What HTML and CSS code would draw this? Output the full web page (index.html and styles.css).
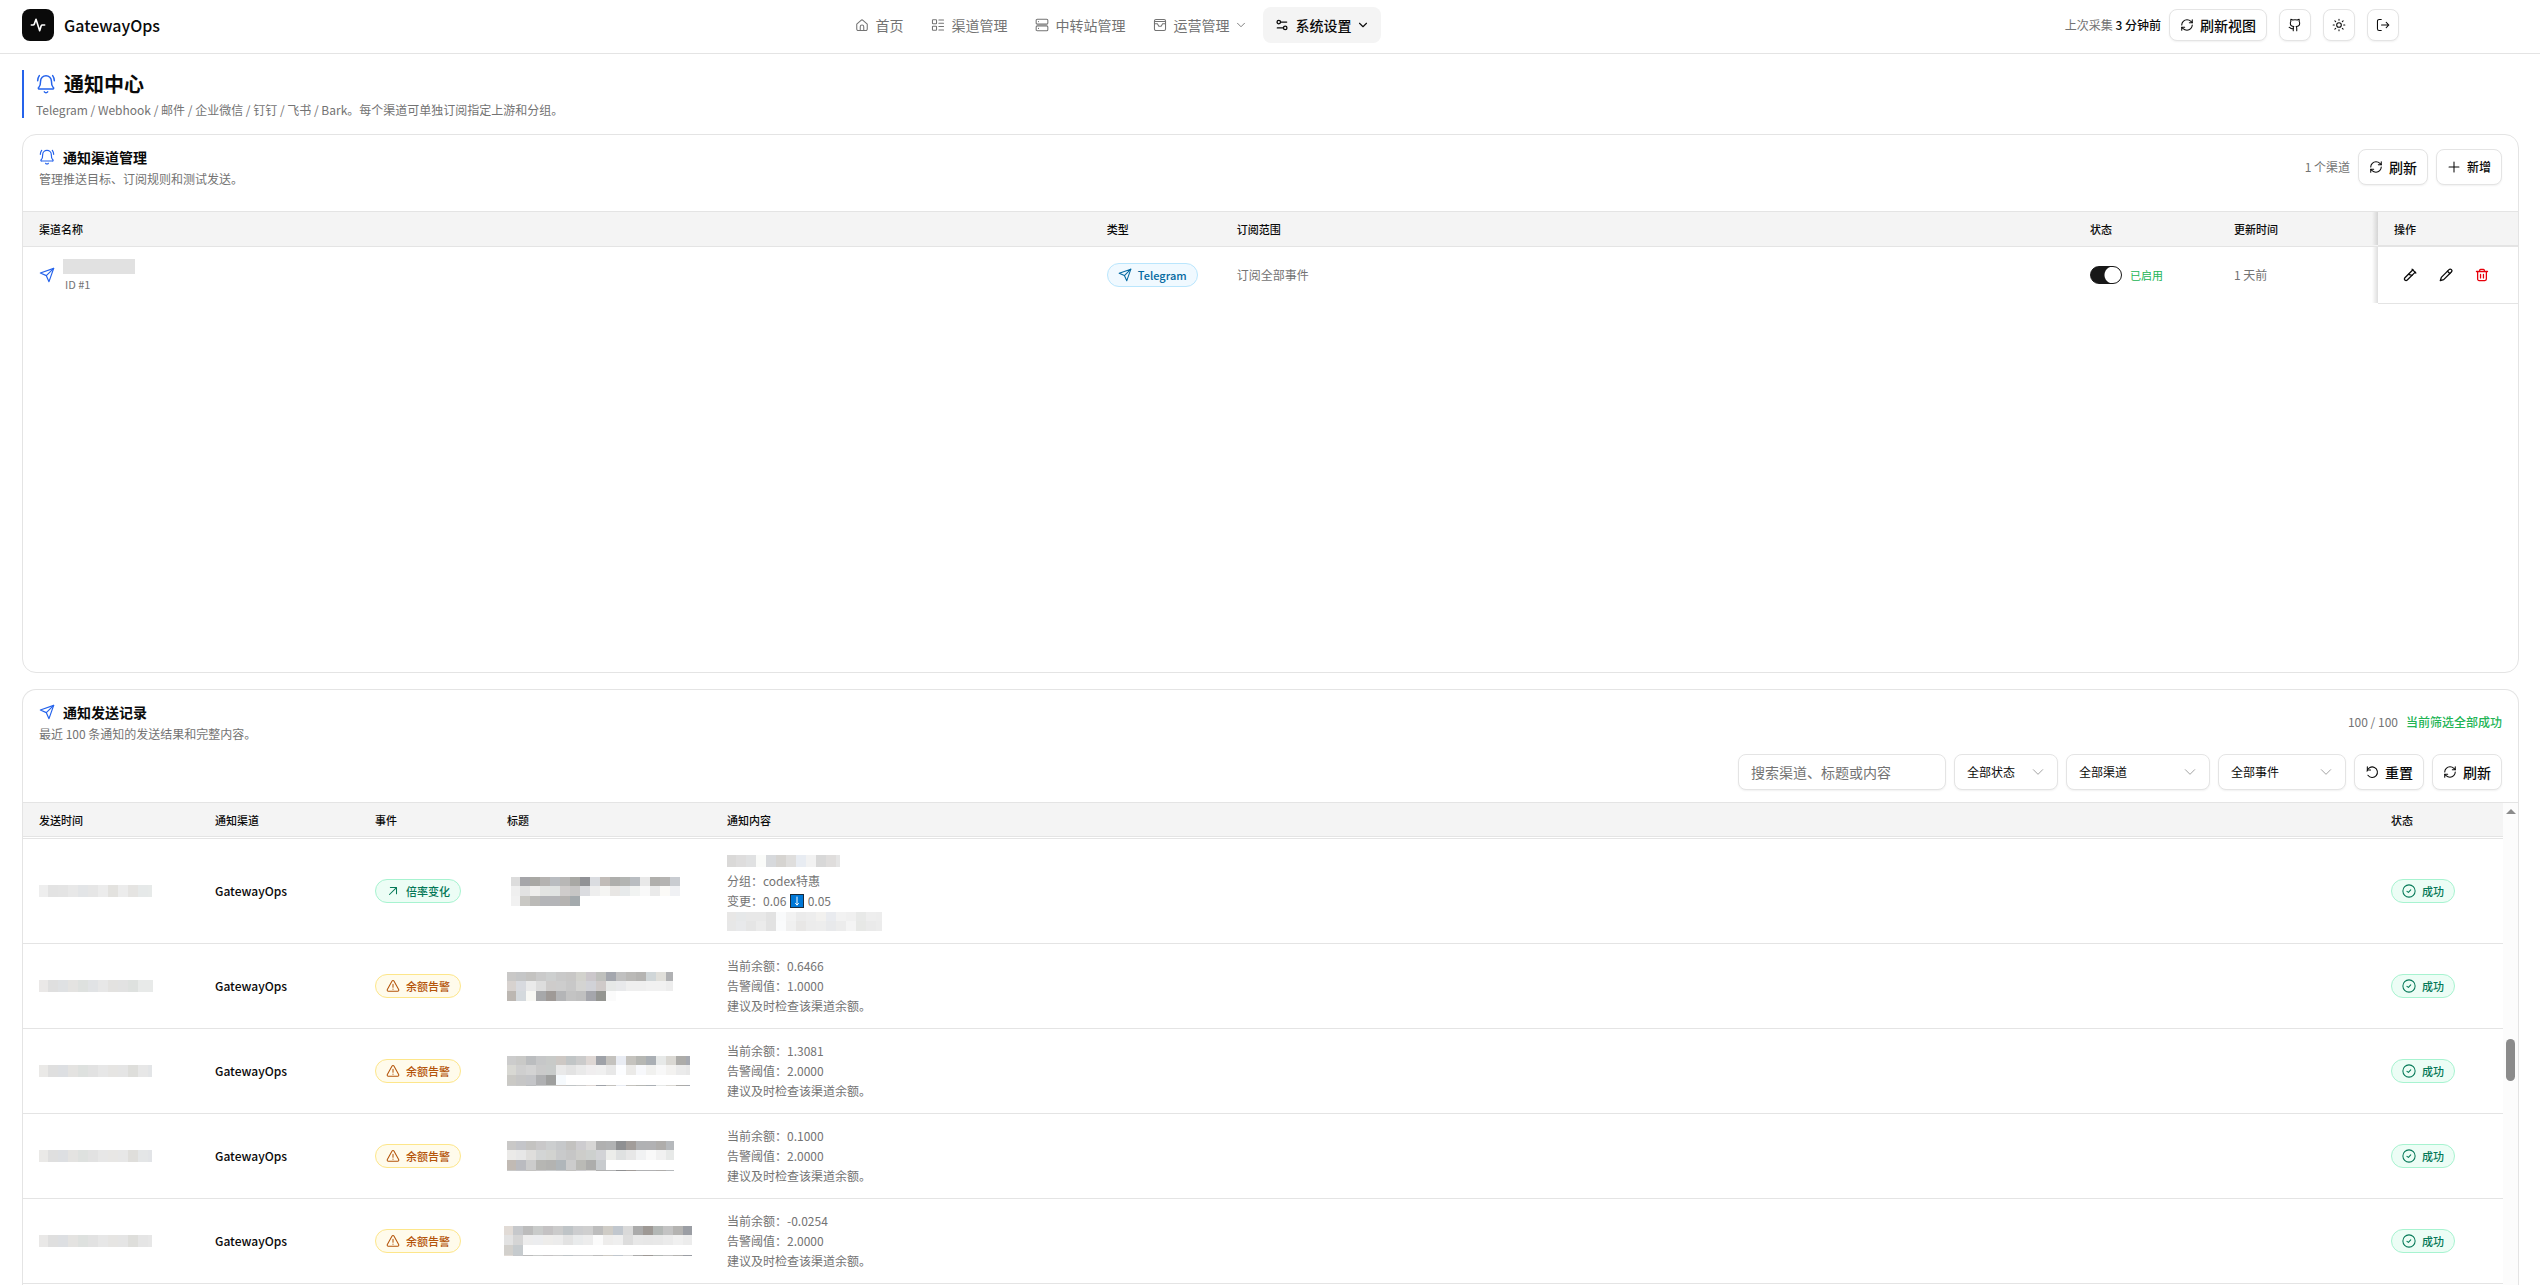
FILE: index.html
```html
<!DOCTYPE html>
<html lang="zh-CN">
<head>
    <meta charset="utf-8">
    <title>GatewayOps</title>
    <link rel="stylesheet" href="styles.css">
</head>
<body>
    <svg class="sprite" aria-hidden="true">
        <symbol id="i-pulse" viewBox="0 0 24 24"><path d="M2 12h2.500c1 0 1.600-.5 1.900-1.300L9 3.500l5.500 17 2.300-7.300c.3-.8.9-1.200 1.700-1.200H22"/></symbol>
        <symbol id="i-home" viewBox="0 0 24 24"><path d="M3 10.500 10.300 4a2.600 2.600 0 0 1 3.400 0L21 10.500V19a2.500 2.500 0 0 1-2.500 2.500h-13A2.500 2.500 0 0 1 3 19Z"/><path d="M9 21v-6a3 3 0 0 1 6 0v6"/></symbol>
        <symbol id="i-list" viewBox="0 0 24 24"><rect x="2.500" y="3" width="7" height="7" rx="1"/><rect x="2.500" y="14" width="7" height="7" rx="1"/><path d="M13.500 3.500h8M13.500 9h8M13.500 14.500h8M13.500 20.500h8"/></symbol>
        <symbol id="i-server" viewBox="0 0 24 24"><rect x="2" y="2" width="20" height="8.500" rx="2"/><rect x="2" y="13.500" width="20" height="8.500" rx="2"/><path d="M6 6.200h.1M6 17.800h.1"/></symbol>
        <symbol id="i-archive" viewBox="0 0 24 24"><rect x="2.500" y="2.500" width="19" height="19" rx="2.500"/><path d="M2.500 6h19M2.500 10h5l2.500 4h4l2.500-4h5"/></symbol>
        <symbol id="i-sliders" viewBox="0 0 24 24"><circle cx="6.500" cy="7" r="3"/><circle cx="17.500" cy="17" r="3"/><path d="M9.500 7H20M4 17h10.500"/></symbol>
        <symbol id="i-down" viewBox="0 0 24 24"><path d="m5 8.500 7 7 7-7"/></symbol>
        <symbol id="i-refresh" viewBox="0 0 24 24"><path d="M3 12a9 9 0 0 1 9-9 9.750 9.750 0 0 1 6.740 2.740L21 8"/><path d="M21 3v5h-5"/><path d="M21 12a9 9 0 0 1-9 9 9.750 9.750 0 0 1-6.740-2.740L3 16"/><path d="M8 16H3v5"/></symbol>
        <symbol id="i-reset" viewBox="0 0 24 24"><path d="M3.500 10.500A9 9 0 1 1 5 17.500"/><path d="M4 3v5.500h5.500"/></symbol>
        <symbol id="i-github" viewBox="0 0 24 24"><path d="M15 22v-4a4.800 4.800 0 0 0-1-3.500c3 0 6-2 6-5.500.08-1.250-.27-2.480-1-3.500.28-1.150.28-2.350 0-3.500 0 0-1 0-3 1.500-2.640-.5-5.360-.5-8 0C6 2 5 2 5 2c-.3 1.150-.3 2.350 0 3.500A5.400 5.400 0 0 0 4 9c0 3.500 3 5.500 6 5.500-.39.490-.68 1.050-.85 1.650-.17.600-.22 1.230-.15 1.850v4"/><path d="M9 18c-4.510 2-5-2-7-2"/></symbol>
        <symbol id="i-sun" viewBox="0 0 24 24"><circle cx="12" cy="12" r="4"/><path d="M12 2v2M12 20v2M4.900 4.900l1.400 1.400M17.700 17.700l1.400 1.400M2 12h2M20 12h2M6.300 17.700l-1.400 1.400M19.100 4.900l-1.400 1.400"/></symbol>
        <symbol id="i-logout" viewBox="0 0 24 24"><path d="M9 2.500H5.500A3 3 0 0 0 2.500 5.500v13a3 3 0 0 0 3 3H9"/><path d="M9.500 12H22M17.500 7.500 22 12l-4.500 4.500"/></symbol>
        <symbol id="i-bell" viewBox="0 0 24 24"><path d="M10 21.500a2.500 2.500 0 0 0 4 0"/><path d="M22 8c0-2.300-.8-4.300-2-6M4 2C2.800 3.700 2 5.700 2 8"/><path d="M3.500 16A1 1 0 0 0 4.200 18h15.600a1 1 0 0 0 .7-2C19.200 14.600 18.500 12.500 18.500 8.500a6.500 6.500 0 0 0-13 0c0 4-.7 6.100-2 7.500"/></symbol>
        <symbol id="i-send" viewBox="0 0 24 24"><path d="M22 2 15 22l-4-9-9-4Z"/><path d="M22 2 11 13"/></symbol>
        <symbol id="i-plus" viewBox="0 0 24 24"><path d="M12 3.500v17M3.500 12h17"/></symbol>
        <symbol id="i-tube" viewBox="0 0 24 24"><path d="M21 7 7.300 20.700a2.800 2.800 0 0 1-4-4L17 3"/><path d="m15.500 2 6.500 6.500"/><path d="m9.500 11 6 1.500"/></symbol>
        <symbol id="i-pencil" viewBox="0 0 24 24"><path d="M21.200 6.800a2.800 2.800 0 0 0-4-4L4 16l-1.800 5.800L8 20Z"/><path d="m14.500 5.500 4 4"/></symbol>
        <symbol id="i-trash" viewBox="0 0 24 24"><path d="M2.500 6h19M8 6V4a1.500 1.500 0 0 1 1.500-1.500h5A1.500 1.500 0 0 1 16 4v2M4.500 6v13A2.500 2.500 0 0 0 7 21.500h10a2.500 2.500 0 0 0 2.500-2.500V6M9.500 11v6M14.500 11v6"/></symbol>
        <symbol id="i-up-right" viewBox="0 0 24 24"><path d="M6 18 17.500 6.500M7.500 6H18v10.500"/></symbol>
        <symbol id="i-alert" viewBox="0 0 24 24"><path d="M10.400 3.500 2.300 18a2 2 0 0 0 1.800 3h15.800a2 2 0 0 0 1.800-3L13.600 3.500a1.850 1.850 0 0 0-3.200 0Z"/><path d="M12 9v5M12 17.300v.1"/></symbol>
        <symbol id="i-check" viewBox="0 0 24 24"><circle cx="12" cy="12" r="10.500"/><path d="m8.500 12.500 2.500 2 4-4.500"/></symbol>
        <symbol id="i-arrow-key" viewBox="0 0 14 14"><path d="M0 0h14v14H0z" fill="#1b2b3b" stroke="none"/><path d="M1 1h12v12H1z" fill="#0078d7" stroke="none"/><path d="M7 3v8M5.500 9.500 7 11l1.500-1.500" stroke="#fff" stroke-width="1"/></symbol>
    </svg>

    <header class="topbar">
        <a class="brand" href="#">
            <span class="brand-mark"><svg class="icon icon-16"><use href="#i-pulse"/></svg></span>
            GatewayOps
        </a>
        <nav class="nav">
            <a class="nav-item" href="#"><svg class="icon"><use href="#i-home"/></svg>首页</a>
            <a class="nav-item" href="#"><svg class="icon"><use href="#i-list"/></svg>渠道管理</a>
            <a class="nav-item" href="#"><svg class="icon"><use href="#i-server"/></svg>中转站管理</a>
            <a class="nav-item" href="#"><svg class="icon"><use href="#i-archive"/></svg>运营管理<svg class="icon icon-12"><use href="#i-down"/></svg></a>
            <a class="nav-item active" href="#"><svg class="icon"><use href="#i-sliders"/></svg>系统设置<svg class="icon icon-12"><use href="#i-down"/></svg></a>
        </nav>
        <div class="topbar-actions">
            <div class="collect">
                <span class="muted">上次采集 <strong>3 分钟前</strong></span>
                <button class="btn btn-sm" type="button"><svg class="icon"><use href="#i-refresh"/></svg>刷新视图</button>
            </div>
            <button class="btn btn-square" type="button" aria-label="GitHub"><svg class="icon"><use href="#i-github"/></svg></button>
            <button class="btn btn-square" type="button" aria-label="主题"><svg class="icon"><use href="#i-sun"/></svg></button>
            <button class="btn btn-square" type="button" aria-label="退出"><svg class="icon"><use href="#i-logout"/></svg></button>
        </div>
    </header>

    <main class="page">
        <div class="page-title">
            <h1><svg class="icon icon-20 blue"><use href="#i-bell"/></svg>通知中心</h1>
            <p>Telegram / Webhook / 邮件 / 企业微信 / 钉钉 / 飞书 / Bark。每个渠道可单独订阅指定上游和分组。</p>
        </div>

        <section class="panel channels">
            <div class="panel-head">
                <div>
                    <h2><svg class="icon icon-16 blue"><use href="#i-bell"/></svg>通知渠道管理</h2>
                    <p>管理推送目标、订阅规则和测试发送。</p>
                </div>
                <div class="tools">
                    <span class="muted">1 个渠道</span>
                    <button class="btn" type="button"><svg class="icon"><use href="#i-refresh"/></svg>刷新</button>
                    <button class="btn btn-text-sm" type="button"><svg class="icon"><use href="#i-plus"/></svg>新增</button>
                </div>
            </div>
            <table class="table channel-table">
                <thead>
                    <tr>
                        <th class="col-name">渠道名称</th>
                        <th class="col-type">类型</th>
                        <th>订阅范围</th>
                        <th class="col-switch">状态</th>
                        <th class="col-updated">更新时间</th>
                        <th class="col-ops">操作</th>
                    </tr>
                </thead>
                <tbody>
                    <tr>
                        <td>
                            <div class="channel">
                                <svg class="icon icon-16 blue"><use href="#i-send"/></svg>
                                <div>
                                    <span class="redacted"></span>
                                    <span class="channel-id">ID #1</span>
                                </div>
                            </div>
                        </td>
                        <td><span class="badge sky"><svg class="icon"><use href="#i-send"/></svg>Telegram</span></td>
                        <td class="muted">订阅全部事件</td>
                        <td>
                            <label class="switch"><input type="checkbox" checked>已启用</label>
                        </td>
                        <td class="muted">1 天前</td>
                        <td class="col-ops">
                            <div class="ops">
                                <button type="button" aria-label="测试"><svg class="icon"><use href="#i-tube"/></svg></button>
                                <button type="button" aria-label="编辑"><svg class="icon"><use href="#i-pencil"/></svg></button>
                                <button class="danger" type="button" aria-label="删除"><svg class="icon"><use href="#i-trash"/></svg></button>
                            </div>
                        </td>
                    </tr>
                </tbody>
            </table>
        </section>

        <section class="panel records">
            <div class="panel-head">
                <div>
                    <h2><svg class="icon icon-16 blue"><use href="#i-send"/></svg>通知发送记录</h2>
                    <p>最近 100 条通知的发送结果和完整内容。</p>
                </div>
                <div class="filters">
                    <div class="summary"><span class="muted">100 / 100</span><span class="ok">当前筛选全部成功</span></div>
                    <div class="tools">
                        <input class="search" type="text" placeholder="搜索渠道、标题或内容" aria-label="搜索">
                        <div class="select select-status"><select aria-label="状态"><option>全部状态</option></select><svg class="icon icon-16"><use href="#i-down"/></svg></div>
                        <div class="select select-channel"><select aria-label="渠道"><option>全部渠道</option></select><svg class="icon icon-16"><use href="#i-down"/></svg></div>
                        <div class="select select-event"><select aria-label="事件"><option>全部事件</option></select><svg class="icon icon-16"><use href="#i-down"/></svg></div>
                        <button class="btn" type="button"><svg class="icon"><use href="#i-reset"/></svg>重置</button>
                        <button class="btn" type="button"><svg class="icon"><use href="#i-refresh"/></svg>刷新</button>
                    </div>
                </div>
            </div>
            <div class="scroller">
                <table class="table record-table">
                    <thead>
                        <tr>
                            <th class="col-time">发送时间</th>
                            <th class="col-channel">通知渠道</th>
                            <th class="col-event">事件</th>
                            <th class="col-title">标题</th>
                            <th>通知内容</th>
                            <th class="col-status">状态</th>
                        </tr>
                    </thead>
                    <tbody>
                        <tr>
                            <td><span class="mosaic" data-width="113" data-rows="ee e3 e4 e8 e3e5e7 e6 ec e3e2df ec e5e4e2 e6e9e9 e7eae9"></span></td>
                            <td class="strong">GatewayOps</td>
                            <td><span class="badge green"><svg class="icon"><use href="#i-up-right"/></svg>倍率变化</span></td>
                            <td class="inset"><span class="mosaic" data-width="169" data-rows="dc a5a5a9 a9a8a4 b5b3b1 b9bcc0 b8b7b6 a8a8a4 919296 dadce0 c1bcb8 aeaeac b3b5b3 b9bdc1 e8 b0afac b5b4b2 c9ccd1|ef e2 efeeec e3e4e2 e0e3e2 cfcccb c7c6c5 dbdce0 ee f5f5f3 e8e6e4 e7eaeb f1f3f2 f9 ea fbfaf7 f0f1f4|f1 c9c8c4 bbbab7 b4b5b8 b4b5b8 b5b3b1 a4aaad"></span></td>
                            <td class="content">
                                <div><span class="mosaic" data-width="113" data-rows="dad9d8 dedddd e0e1e2 fafbf9 d7d9dc d6d4d1 dfdedd e8ecf2 f2 d8 dfdddc e5"></span></div>
                                <div>分组：codex特惠</div>
                                <div>变更：0.06 <svg class="icon arrow-key"><use href="#i-arrow-key"/></svg> 0.05</div>
                                <div><span class="mosaic" data-width="155" data-rows="e8e7e6 e6e8e9 e8 e8 e2 f9fafb f2 eb ed f2f1ef e9ebef f2 f0 e8e9e8 ee ed|e7 e8e9eb e5 eb e2 fafbfc f0 e8e7e6 ec ed e8e9eb ec f4 e7e8e6 ea ec"></span></div>
                            </td>
                            <td><span class="badge green"><svg class="icon"><use href="#i-check"/></svg>成功</span></td>
                        </tr>
                        <tr>
                            <td><span class="mosaic" data-width="114" data-rows="eae8e7 df dfe1e3 e4e3e1 dee1df e1e3e5 e7 e3e2e0 e2 dee1df e8eae9 e8eae9"></span></td>
                            <td class="strong">GatewayOps</td>
                            <td><span class="badge amber"><svg class="icon"><use href="#i-alert"/></svg>余额告警</span></td>
                            <td><span class="mosaic" data-width="166" data-rows="c9c8c7 c5c6c7 c4c3c1 ca cdcfcf c9 c8c7c6 d2d2cd cbc7cb bfc0bd a4a7ae c0 bab9b7 b5b4b2 d0d6d8 e0dfda b0b1b3|d7d2cf d8dadf ea dd cecccb cd c8 d4d4d2 d1d2d7 cfcac9 e6e8e7 e8e9eb ef ef f1 f1 ed|bcb7b2 d4d9dd f8f8f4 a7a8aa 9f9a97 b4b5b7 c3 c0 a5a6ac 949591 fb"></span></td>
                            <td class="content"><div>当前余额：0.6466</div><div>告警阈值：1.0000</div><div>建议及时检查该渠道余额。</div></td>
                            <td><span class="badge green"><svg class="icon"><use href="#i-check"/></svg>成功</span></td>
                        </tr>
                        <tr>
                            <td><span class="mosaic" data-width="113" data-rows="eae9e7 df dddfe2 e4e3e1 dee1df e2 e7 e6e5e3 e5 dededb e7 e3e5e7"></span></td>
                            <td class="strong">GatewayOps</td>
                            <td><span class="badge amber"><svg class="icon"><use href="#i-alert"/></svg>余额告警</span></td>
                            <td><span class="mosaic underlined" data-width="183" data-rows="cc c9c9c7 bbbdbf c6c7c8 c8cac8 cdc8c4 c1c5c6 cb ded7d4 9fa2a8 c4c2be e9ecf3 c5c3be b6b7b3 aaafb4 e7e9e8 dad8d3 adaca9 a6a9b0|d8d8d3 cf d3 ca c8cbca e9 e3 ea f0eeef f0 e8 fcfdff ebeae8 f7f8fb f1f1ef f8 f3f2f0 eb e8|cac9c5 c6 c4c5c8 afb0b2 9e9f9e f6fafd"></span></td>
                            <td class="content"><div>当前余额：1.3081</div><div>告警阈值：2.0000</div><div>建议及时检查该渠道余额。</div></td>
                            <td><span class="badge green"><svg class="icon"><use href="#i-check"/></svg>成功</span></td>
                        </tr>
                        <tr>
                            <td><span class="mosaic" data-width="113" data-rows="eae9e7 df dddfe2 e4e3e1 dee1df e2 e7 e8e7e5 e7 dfdedb e4e6e7 e2e4e7"></span></td>
                            <td class="strong">GatewayOps</td>
                            <td><span class="badge amber"><svg class="icon"><use href="#i-alert"/></svg>余额告警</span></td>
                            <td><span class="mosaic underlined" data-width="167" data-rows="c9c8c7 c4c5c9 c4c3c1 c9c8c9 cccecf c6c8ca c3c2c0 cdcccf d7d6d5 b0 b1b2b3 8f9092 a29d9a b0b1b3 b1b1b3 afadab b6b9bc|ebeae8 e7 dfdedc d3d5d5 d2d3d0 c9cacb c6 cdcdca cdd0ce d2d3d6 ecedea dfe1e1 e7 f1f2f3 f9 f1 e7e9e8|c1bab4 babbc0 cc b6b6b3 b3b3b1 b0b6ba cc babab6 adadac c8cbce"></span></td>
                            <td class="content"><div>当前余额：0.1000</div><div>告警阈值：2.0000</div><div>建议及时检查该渠道余额。</div></td>
                            <td><span class="badge green"><svg class="icon"><use href="#i-check"/></svg>成功</span></td>
                        </tr>
                        <tr>
                            <td><span class="mosaic" data-width="113" data-rows="e9e8e7 df dddfe2 e4e3e1 dee1df e2 e7 e6e5e3 e5 dededb e5 e7"></span></td>
                            <td class="strong">GatewayOps</td>
                            <td><span class="badge amber"><svg class="icon"><use href="#i-alert"/></svg>余额告警</span></td>
                            <td class="outset"><span class="mosaic underlined" data-width="188" data-rows="e1dbd6 c6c8cb bc c9cbca c4c2c3 cb bfc4c7 cccdcf cf bd cfccc6 c1c7ce d9 ababab 9e9995 b3b7b5 c3 b4b3b1 9b9ea4|e2 d5 ed ecedef eeedeb ec e3 e9ebec ed fb eeedec efefef dd e8 e7 e8 eb f0 ec|d2d0cc c6cbce"></span></td>
                            <td class="content"><div>当前余额：-0.0254</div><div>告警阈值：2.0000</div><div>建议及时检查该渠道余额。</div></td>
                            <td><span class="badge green"><svg class="icon"><use href="#i-check"/></svg>成功</span></td>
                        </tr>
                    </tbody>
                </table>
                <div class="scrollbar"><span class="scroll-arrow"></span><span class="scroll-thumb"></span></div>
            </div>
        </section>
    </main>
    <script src="mosaic.js"></script>
</body>
</html>
```

FILE: styles.css
```css
:root {
    --text: #0a0a0a;
    --muted: #737373;
    --line: #e4e4e4;
    --head: #f4f4f4;
    --blue: #2563eb;
}

* {
    box-sizing: border-box;
}

body {
    margin: 0;
    height: 100vh;
    display: flex;
    flex-direction: column;
    overflow: hidden;
    background: #fff;
    color: var(--text);
    font-family: "Noto Sans CJK SC", "Noto Sans", sans-serif;
    font-size: 12px;
    line-height: 20px;
}

h1,
h2,
p {
    margin: 0;
}

a {
    color: inherit;
    text-decoration: none;
}

button,
input,
select {
    font: inherit;
    color: inherit;
}

.sprite {
    position: absolute;
    width: 0;
    height: 0;
}

.icon {
    width: 14px;
    height: 14px;
    flex: none;
    fill: none;
    stroke: currentColor;
    stroke-width: 1.8;
    stroke-linecap: round;
    stroke-linejoin: round;
}

.icon-12 {
    width: 12px;
    height: 12px;
}

.icon-16 {
    width: 16px;
    height: 16px;
}

.icon-20 {
    width: 20px;
    height: 20px;
}

.blue {
    color: var(--blue);
}

.muted {
    color: var(--muted);
}

.ok {
    color: #22b455;
    font-weight: 500;
}

/* top bar */

.topbar {
    flex: none;
    display: flex;
    align-items: center;
    justify-content: space-between;
    padding: 7px 141px 10px 22px;
    border-bottom: 1px solid var(--line);
}

.brand {
    display: flex;
    align-items: center;
    gap: 10px;
    font-size: 16px;
    font-weight: 500;
}

.brand-mark {
    display: flex;
    align-items: center;
    justify-content: center;
    width: 32px;
    height: 32px;
    border-radius: 8px;
    background: var(--text);
    color: #fff;
}

.brand-mark .icon {
    stroke-width: 2.4;
}

.nav {
    display: flex;
    gap: 4px;
}

.nav-item {
    display: flex;
    align-items: center;
    gap: 6px;
    height: 36px;
    padding: 0 12px;
    border-radius: 8px;
    color: var(--muted);
    font-size: 14px;
}

.nav-item.active {
    background: var(--head);
    color: var(--text);
    font-weight: 500;
}

.nav-item.active .icon {
    stroke-width: 2.2;
}

.topbar-actions {
    display: flex;
    gap: 12px;
}

.collect {
    display: flex;
    align-items: center;
    gap: 8px;
}

.collect strong {
    color: var(--text);
    font-weight: 500;
}

.btn {
    display: inline-flex;
    align-items: center;
    justify-content: center;
    gap: 6px;
    height: 36px;
    padding: 0 10px;
    border: 1px solid var(--line);
    border-radius: 8px;
    background: #fff;
    box-shadow: 0 1px 2px rgba(0, 0, 0, 0.06);
    font-size: 14px;
    font-weight: 500;
}

.btn-sm {
    height: 32px;
}

.btn-text-sm {
    font-size: 12px;
}

.btn-square {
    width: 32px;
    height: 32px;
    padding: 0;
}

/* page */

.page {
    flex: 1;
    min-height: 0;
    display: flex;
    flex-direction: column;
    gap: 16px;
    padding: 16px 21px 0 22px;
}

.page-title {
    padding-left: 12px;
    border-left: 2px solid var(--blue);
}

.page-title h1 {
    display: flex;
    align-items: center;
    gap: 8px;
    font-size: 20px;
    line-height: 28px;
    font-weight: 600;
}

.page-title p {
    margin-top: 4px;
    line-height: 16px;
    color: var(--muted);
}

.panel {
    border: 1px solid var(--line);
    border-radius: 14px;
    overflow: hidden;
}

.channels {
    flex: none;
    min-height: 539px;
}

.records {
    flex: 1;
    min-height: 0;
    display: flex;
    flex-direction: column;
    border-bottom: 0;
    border-bottom-left-radius: 0;
    border-bottom-right-radius: 0;
}

.panel-head {
    display: flex;
    justify-content: space-between;
    padding: 12px 16px 22px;
}

.channels .tools {
    align-self: flex-start;
    padding-top: 2px;
}

.records .panel-head {
    padding-bottom: 12px;
}

.panel-head h2 {
    display: flex;
    align-items: center;
    gap: 8px;
    font-size: 14px;
    line-height: 20px;
    font-weight: 600;
}

.panel-head p {
    margin-top: 2px;
    color: var(--muted);
}

.tools {
    display: flex;
    align-items: center;
    gap: 8px;
}

.filters {
    display: flex;
    flex-direction: column;
    align-items: flex-end;
    gap: 22px;
    padding-top: 10px;
}

.summary {
    display: flex;
    gap: 8px;
}

.search,
.select select {
    height: 36px;
    padding: 0 12px;
    border: 1px solid var(--line);
    border-radius: 8px;
    background: #fff;
    box-shadow: 0 1px 2px rgba(0, 0, 0, 0.06);
}

.search {
    width: 208px;
    font-size: 14px;
}

.search::placeholder {
    color: var(--muted);
}

.select {
    position: relative;
}

.select select {
    width: 100%;
    appearance: none;
}

.select .icon {
    position: absolute;
    top: 10px;
    right: 12px;
    color: #a3a3a3;
    stroke-width: 1.5;
    pointer-events: none;
}

.select-status {
    width: 104px;
}

.select-channel {
    width: 144px;
}

.select-event {
    width: 128px;
}

/* tables */

.table {
    width: 100%;
    table-layout: fixed;
    border-collapse: separate;
    border-spacing: 0;
}

.table th {
    height: 35px;
    padding: 0 16px;
    background: var(--head);
    border-bottom: 1px solid var(--line);
    font-size: 11px;
    font-weight: 500;
    text-align: left;
}

.table td {
    padding: 0 16px;
}

.channel-table {
    border-top: 1px solid var(--line);
}

.channel-table td {
    height: 57px;
    border-bottom: 1px solid transparent;
}

.col-name {
    width: 42.8%;
}

.col-type {
    width: 130px;
}

.col-switch {
    width: 144px;
}

.col-updated {
    width: 160px;
}

.table .col-ops {
    position: relative;
    width: 140px;
    border-bottom: 1px solid var(--line);
}

.table th.col-ops {
    border-bottom-width: 2px;
}

.col-ops::before {
    content: "";
    position: absolute;
    top: 0;
    bottom: 0;
    left: -6px;
    width: 6px;
    background: linear-gradient(to left, rgba(0, 0, 0, 0.13), rgba(0, 0, 0, 0));
}

.channel {
    display: flex;
    align-items: center;
    gap: 8px;
}

.redacted {
    display: block;
    width: 72px;
    height: 15px;
    background: #e1e1e1;
}

.channel-id {
    display: block;
    margin-top: 3px;
    padding-left: 2px;
    color: var(--muted);
    font-size: 11px;
    line-height: 14px;
}

.badge {
    display: inline-flex;
    align-items: center;
    gap: 6px;
    height: 24px;
    padding: 0 10px;
    border: 1px solid;
    border-radius: 12px;
    font-size: 11px;
    font-weight: 500;
    vertical-align: middle;
}

.badge.sky {
    background: #f0f9ff;
    border-color: #bae6fd;
    color: #0369a1;
}

.badge.green {
    background: #ecfdf5;
    border-color: #a7f3d0;
    color: #047857;
}

.badge.amber {
    background: #fffbeb;
    border-color: #fde68a;
    color: #b45309;
}

.switch {
    display: flex;
    align-items: center;
    gap: 8px;
    color: #22b455;
    font-size: 11px;
}

.switch input {
    appearance: none;
    width: 32px;
    height: 18px;
    margin: 0;
    border: 1px solid #171717;
    border-radius: 9px;
    background: radial-gradient(circle at 22px 8px, #fff 8px, #171717 9px);
}

.ops {
    display: flex;
    gap: 4px;
}

.ops button {
    display: flex;
    align-items: center;
    justify-content: center;
    flex: none;
    width: 32px;
    height: 32px;
    padding: 0;
    border: 0;
    background: none;
}

.ops .icon {
    stroke-width: 2.2;
}

.ops .danger {
    color: #e7000b;
}

.scroller {
    flex: 1;
    min-height: 0;
    display: flex;
    align-items: flex-start;
    overflow: hidden;
    border-top: 1px solid var(--line);
}

.record-table {
    flex: 1;
}

.record-table th {
    height: 36px;
    border-bottom: 3px double var(--line);
    background-clip: padding-box;
}

.record-table td {
    padding: 12px 16px;
    border-bottom: 1px solid var(--line);
}

.record-table .inset {
    padding-left: 20px;
}

.record-table .outset {
    padding-left: 13px;
}

.col-time {
    width: 176px;
}

.col-channel {
    width: 160px;
}

.col-event {
    width: 132px;
}

.col-title {
    width: 220px;
}

.col-status {
    width: 128px;
}

.strong {
    font-weight: 500;
}

.content {
    color: var(--muted);
}

.content div {
    height: 20px;
}

.arrow-key {
    margin: 0 1px;
    vertical-align: -2px;
}

.mosaic svg {
    display: block;
}

.content .mosaic {
    display: flex;
    align-items: center;
    height: 20px;
}

.scrollbar {
    position: relative;
    align-self: stretch;
    flex: none;
    width: 15px;
    background: #fcfcfc;
}

.scroll-arrow {
    position: absolute;
    top: 6px;
    left: 3px;
    border: 5px solid transparent;
    border-top: 0;
    border-bottom-color: #8b8b8b;
}

.scroll-thumb {
    position: absolute;
    top: 49%;
    left: 3px;
    width: 9px;
    height: 42px;
    border-radius: 5px;
    background: #8b8b8b;
}
```

FILE: mosaic.js
```javascript
// Draws masked values as rows of 10px blocks. Two-digit codes are greys.
const NS = "http://www.w3.org/2000/svg";

const toColor = (code) => "#" + (code.length === 2 ? code.repeat(3) : code);

const addBlock = (svg, x, y, h, code) => {
    const rect = document.createElementNS(NS, "rect");
    rect.setAttribute("x", x);
    rect.setAttribute("y", y);
    rect.setAttribute("width", 10);
    rect.setAttribute("height", h);
    rect.setAttribute("fill", toColor(code));
    svg.appendChild(rect);
};

document.querySelectorAll(".mosaic").forEach((el) => {
    const rows = el.dataset.rows.split("|").map((r) => r.split(" "));
    const single = rows.length === 1;
    const underlined = el.classList.contains("underlined");
    const cell = single ? 13 : 10;
    const width = Number(el.dataset.width);
    const height = single ? 12 : rows.length * 10 - 1 + (underlined ? 1 : 0);

    const svg = document.createElementNS(NS, "svg");
    svg.setAttribute("width", width);
    svg.setAttribute("height", height);
    svg.setAttribute("viewBox", `1 1 ${width} ${height}`);

    rows.forEach((row, y) => {
        row.forEach((code, x) => addBlock(svg, x * 10, y * 10, cell, code));
    });
    if (underlined) {
        rows[0].forEach((code, x) => addBlock(svg, x * 10, height, 1, code));
    }
    el.appendChild(svg);
});
```
